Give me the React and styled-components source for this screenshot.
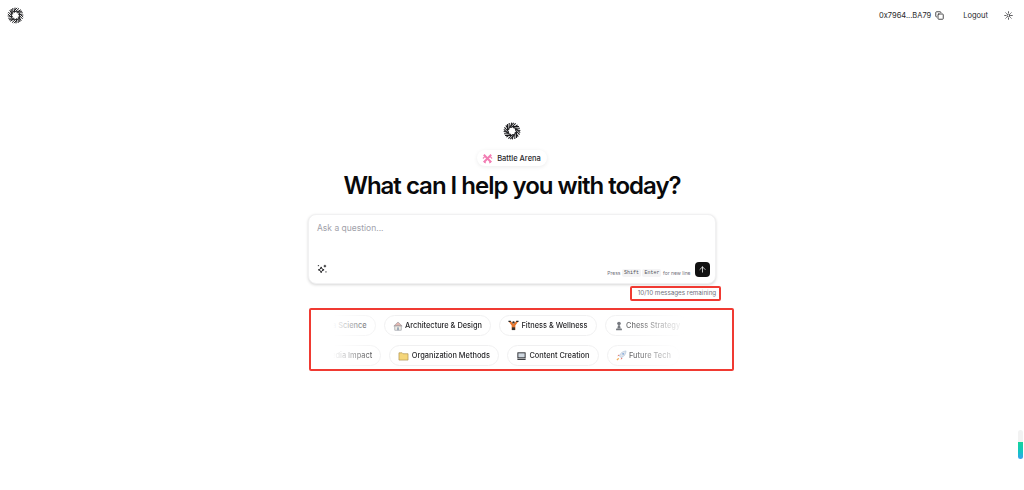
import React from 'react'
import styled, { createGlobalStyle } from 'styled-components'
import { Copy, Sun, ArrowUp } from 'lucide-react'

const Global = createGlobalStyle`
  html, body { margin: 0; padding: 0; background: #fff; }
  body { font-family: Inter, "Liberation Sans", sans-serif; color: #18181b; overflow: hidden; }
`

const Page = styled.div`
  position: relative;
  height: 490px;
  width: 1024px;
  display: flex;
  flex-direction: column;
  overflow: hidden;
`
const Header = styled.header`
  height: 30px;
  display: flex;
  align-items: center;
  justify-content: space-between;
  padding: 0 7px;
`
const HeaderRight = styled.div`
  display: flex;
  align-items: center;
  font-size: 7.5px;
  color: #27272a;
`
const Address = styled.span`
  margin-right: 4px;
`
const CopyBtn = styled.span`
  display: flex;
  margin-right: 19px;
`
const Logout = styled.span`
  margin-right: 16px;
`
const SunBtn = styled.span`
  display: flex;
  margin-right: 4px;
`
const Main = styled.main`
  width: 408px;
  margin: 92px auto 0;
  display: flex;
  flex-direction: column;
  align-items: center;
`
const Badge = styled.div`
  margin-top: 10px;
  height: 16px;
  padding: 0 6px 0 5px;
  display: flex;
  align-items: center;
  gap: 4px;
  border-radius: 8px;
  background: #fff;
  box-shadow: 0 1px 4px rgba(0, 0, 0, 0.08);
  font-size: 7.5px;
  font-weight: 500;
  color: #27272a;
`
const Title = styled.h1`
  margin: 3px 0 0;
  font-size: 24px;
  line-height: 34px;
  font-weight: 600;
  letter-spacing: -1px;
  color: #09090b;
  white-space: nowrap;
`
const Composer = styled.div`
  box-sizing: border-box;
  width: 100%;
  height: 70px;
  margin-top: 11px;
  padding: 8px 5px 6px 8px;
  display: flex;
  flex-direction: column;
  justify-content: space-between;
  border: 1px solid #f1f1f2;
  border-radius: 8px;
  background: #fff;
  box-shadow: 0 1px 3px rgba(0, 0, 0, 0.16);
`
const Placeholder = styled.div`
  font-size: 8.5px;
  line-height: 10px;
  color: #a1a1aa;
`
const ComposerFoot = styled.div`
  display: flex;
  align-items: flex-end;
  justify-content: space-between;
`
const SparkBtn = styled.span`
  display: flex;
  margin-bottom: 3px;
`
const Hint = styled.div`
  display: flex;
  align-items: flex-end;
  gap: 1.5px;
  font-size: 5px;
  line-height: 8px;
  color: #71717a;
`
const Kbd = styled.span`
  padding: 0 2px;
  border-radius: 2px;
  background: #f4f4f5;
  font-family: "Liberation Mono", monospace;
  font-size: 5px;
  color: #52525b;
`
const Send = styled.button`
  width: 15px;
  height: 15px;
  margin-left: 3px;
  padding: 0;
  border: 0;
  border-radius: 4px;
  background: #111;
  color: #fff;
  display: flex;
  align-items: center;
  justify-content: center;
`
const Remaining = styled.div`
  align-self: flex-end;
  box-sizing: border-box;
  width: 91px;
  height: 15px;
  margin: 2px -5px 0 0;
  padding-left: 3px;
  border: 2px solid #f03a32;
  border-radius: 2px;
  font-size: 6.3px;
  line-height: 11px;
  text-align: center;
  color: #71717a;
  white-space: nowrap;
`
const Suggestions = styled.div`
  align-self: flex-start;
  box-sizing: border-box;
  width: 425px;
  height: 63px;
  margin: 7px 0 0 1px;
  border: 2px solid #f03a32;
  border-radius: 2px;
  overflow: hidden;
`
const Track = styled.div`
  padding: 5px 0;
  display: flex;
  flex-direction: column;
  gap: 9px;
  mask-image: linear-gradient(to right, transparent 22px, #000 75px, #000 295px, transparent 375px);
`
const Row = styled.div`
  display: flex;
  gap: 8px;
  margin-left: ${p => p.$shift}px;
`
const Chip = styled.div`
  flex-shrink: 0;
  height: 21px;
  box-sizing: border-box;
  padding: 0 8px;
  display: flex;
  align-items: center;
  gap: 2.5px;
  border: 1px solid #f0f0f1;
  border-radius: 11px;
  background: #fff;
  font-size: 7.4px;
  font-weight: 500;
  color: #27272a;
  white-space: nowrap;
`
const Scroll = styled.div`
  position: absolute;
  right: 1px;
  top: 430px;
  width: 5px;
  height: 29px;
  border-radius: 3px;
  background: linear-gradient(#f2f2f2 0 12px, #16d49a 12px, #13c4c4 22px, #3aa0f0 29px);
`

function Logo({ size }) {
  const blades = Array.from({ length: 8 }, (_, i) => i * 45)
  return (
    <svg width={size} height={size} viewBox="0 0 32 32" fill="none" stroke="#18181b" strokeWidth="1.8">
      {blades.map(a => (
        <g key={a} transform={`rotate(${a} 16 16)`}>
          <path d="M11 10 L19 1.5" />
          <path d="M14.5 10 L22.5 2.5" />
          <path d="M18 10.5 L26 5" />
        </g>
      ))}
    </svg>
  )
}

const Swords = () => (
  <svg width="11" height="11" viewBox="0 0 12 12" fill="none" stroke="#f27db3" strokeWidth="2.2">
    <path d="M2 2 L10 10 M10 2 L2 10" />
    <path d="M1 6 L3 4 M11 6 L9 4 M4 11 L2 9 M8 11 L10 9" strokeWidth="1.2" />
  </svg>
)
const Spark = () => (
  <svg width="10" height="10" viewBox="0 0 12 12" fill="none" stroke="#18181b" strokeWidth="1.1">
    <path d="M5 3.5 L6 6 L8.5 7 L6 8 L5 10.5 L4 8 L1.5 7 L4 6 Z" />
    <path d="M9.5 1 V4 M8 2.5 H11" />
    <path d="M1 2 H2.5 M10 9.5 H11.5" />
  </svg>
)
const House = () => (
  <svg width="10" height="10" viewBox="0 0 12 12">
    <path d="M1 6 L6 1.2 L11 6 Z" fill="#e3b7b0" stroke="#8a8f96" strokeWidth="0.6" />
    <rect x="2.2" y="6" width="7.6" height="5" fill="#f0ede6" stroke="#8a8f96" strokeWidth="0.7" />
    <rect x="5" y="7.6" width="2" height="3.4" fill="#8fa0b3" />
  </svg>
)
const Lifter = () => (
  <svg width="11" height="11" viewBox="0 0 12 12">
    <path d="M1 2 L3 1 L6 4.5 L9 1 L11 2 L8 6 L8 11 L4 11 L4 6 Z" fill="#e8762c" />
    <path d="M0.5 1.5 H3 M9 1.5 H11.5" stroke="#222" strokeWidth="1.6" />
    <circle cx="6" cy="2.6" r="1.3" fill="#3a2a20" />
    <rect x="4.3" y="8" width="3.4" height="3" fill="#333" />
  </svg>
)
const Pawn = () => (
  <svg width="10" height="10" viewBox="0 0 12 12" fill="#5d6168">
    <circle cx="6" cy="3" r="2.2" />
    <path d="M4.8 5 H7.2 L8 9 H4 Z" />
    <rect x="2.5" y="9" width="7" height="2.2" rx="0.5" />
  </svg>
)
const Folder = () => (
  <svg width="11" height="10" viewBox="0 0 12 11">
    <path d="M1 2 H4.5 L5.5 3 H11 V10 H1 Z" fill="#f5d67a" stroke="#a98d4a" strokeWidth="0.7" />
  </svg>
)
const Laptop = () => (
  <svg width="11" height="10" viewBox="0 0 12 11">
    <rect x="2" y="2" width="8" height="5.5" fill="#cfd8e0" stroke="#26282c" strokeWidth="1" />
    <path d="M1 8.5 H11 L10.2 10 H1.8 Z" fill="#3a3d42" />
  </svg>
)
const Rocket = () => (
  <svg width="11" height="11" viewBox="0 0 12 12">
    <path d="M11 1 C7.5 1.2 4.8 3.2 3.6 6.4 L5.6 8.4 C8.8 7.2 10.8 4.5 11 1 Z" fill="#d7dde6" stroke="#7c9cc4" strokeWidth="0.5" />
    <circle cx="7.8" cy="4.2" r="1" fill="#5b8fd0" />
    <path d="M3.6 6.4 L1.5 6.8 L3 4.8 Z M5.6 8.4 L5.2 10.5 L7.2 9 Z" fill="#e0574f" />
    <path d="M3 9 L1 11" stroke="#f0a03c" strokeWidth="1.4" />
  </svg>
)

const rowOne = [
  [null, 'Data Science'],
  [<House key="h" />, 'Architecture & Design'],
  [<Lifter key="l" />, 'Fitness & Wellness'],
  [<Pawn key="p" />, 'Chess Strategy'],
]
const rowTwo = [
  [null, 'Social Media Impact'],
  [<Folder key="f" />, 'Organization Methods'],
  [<Laptop key="c" />, 'Content Creation'],
  [<Rocket key="r" />, 'Future Tech'],
]

function ChipRow({ items, shift }) {
  return (
    <Row $shift={shift}>
      {items.map(([icon, label]) => (
        <Chip key={label}>{icon}{label}</Chip>
      ))}
    </Row>
  )
}

export default function App() {
  return (
    <Page>
      <Global />
      <Header>
        <Logo size={17} />
        <HeaderRight>
          <Address>0x7964...BA79</Address>
          <CopyBtn><Copy size={9} strokeWidth={2.2} /></CopyBtn>
          <Logout>Logout</Logout>
          <SunBtn><Sun size={9} strokeWidth={2.2} /></SunBtn>
        </HeaderRight>
      </Header>
      <Main>
        <Logo size={18} />
        <Badge><Swords />Battle Arena</Badge>
        <Title>What can I help you with today?</Title>
        <Composer>
          <Placeholder>Ask a question...</Placeholder>
          <ComposerFoot>
            <SparkBtn><Spark /></SparkBtn>
            <Hint>
              Press <Kbd>Shift</Kbd> <Kbd>Enter</Kbd> for new line
              <Send><ArrowUp size={9} /></Send>
            </Hint>
          </ComposerFoot>
        </Composer>
        <Remaining>10/10 messages remaining</Remaining>
        <Suggestions>
          <Track>
            <ChipRow items={rowOne} shift={0} />
            <ChipRow items={rowTwo} shift={-19} />
          </Track>
        </Suggestions>
      </Main>
      <Scroll />
    </Page>
  )
}
